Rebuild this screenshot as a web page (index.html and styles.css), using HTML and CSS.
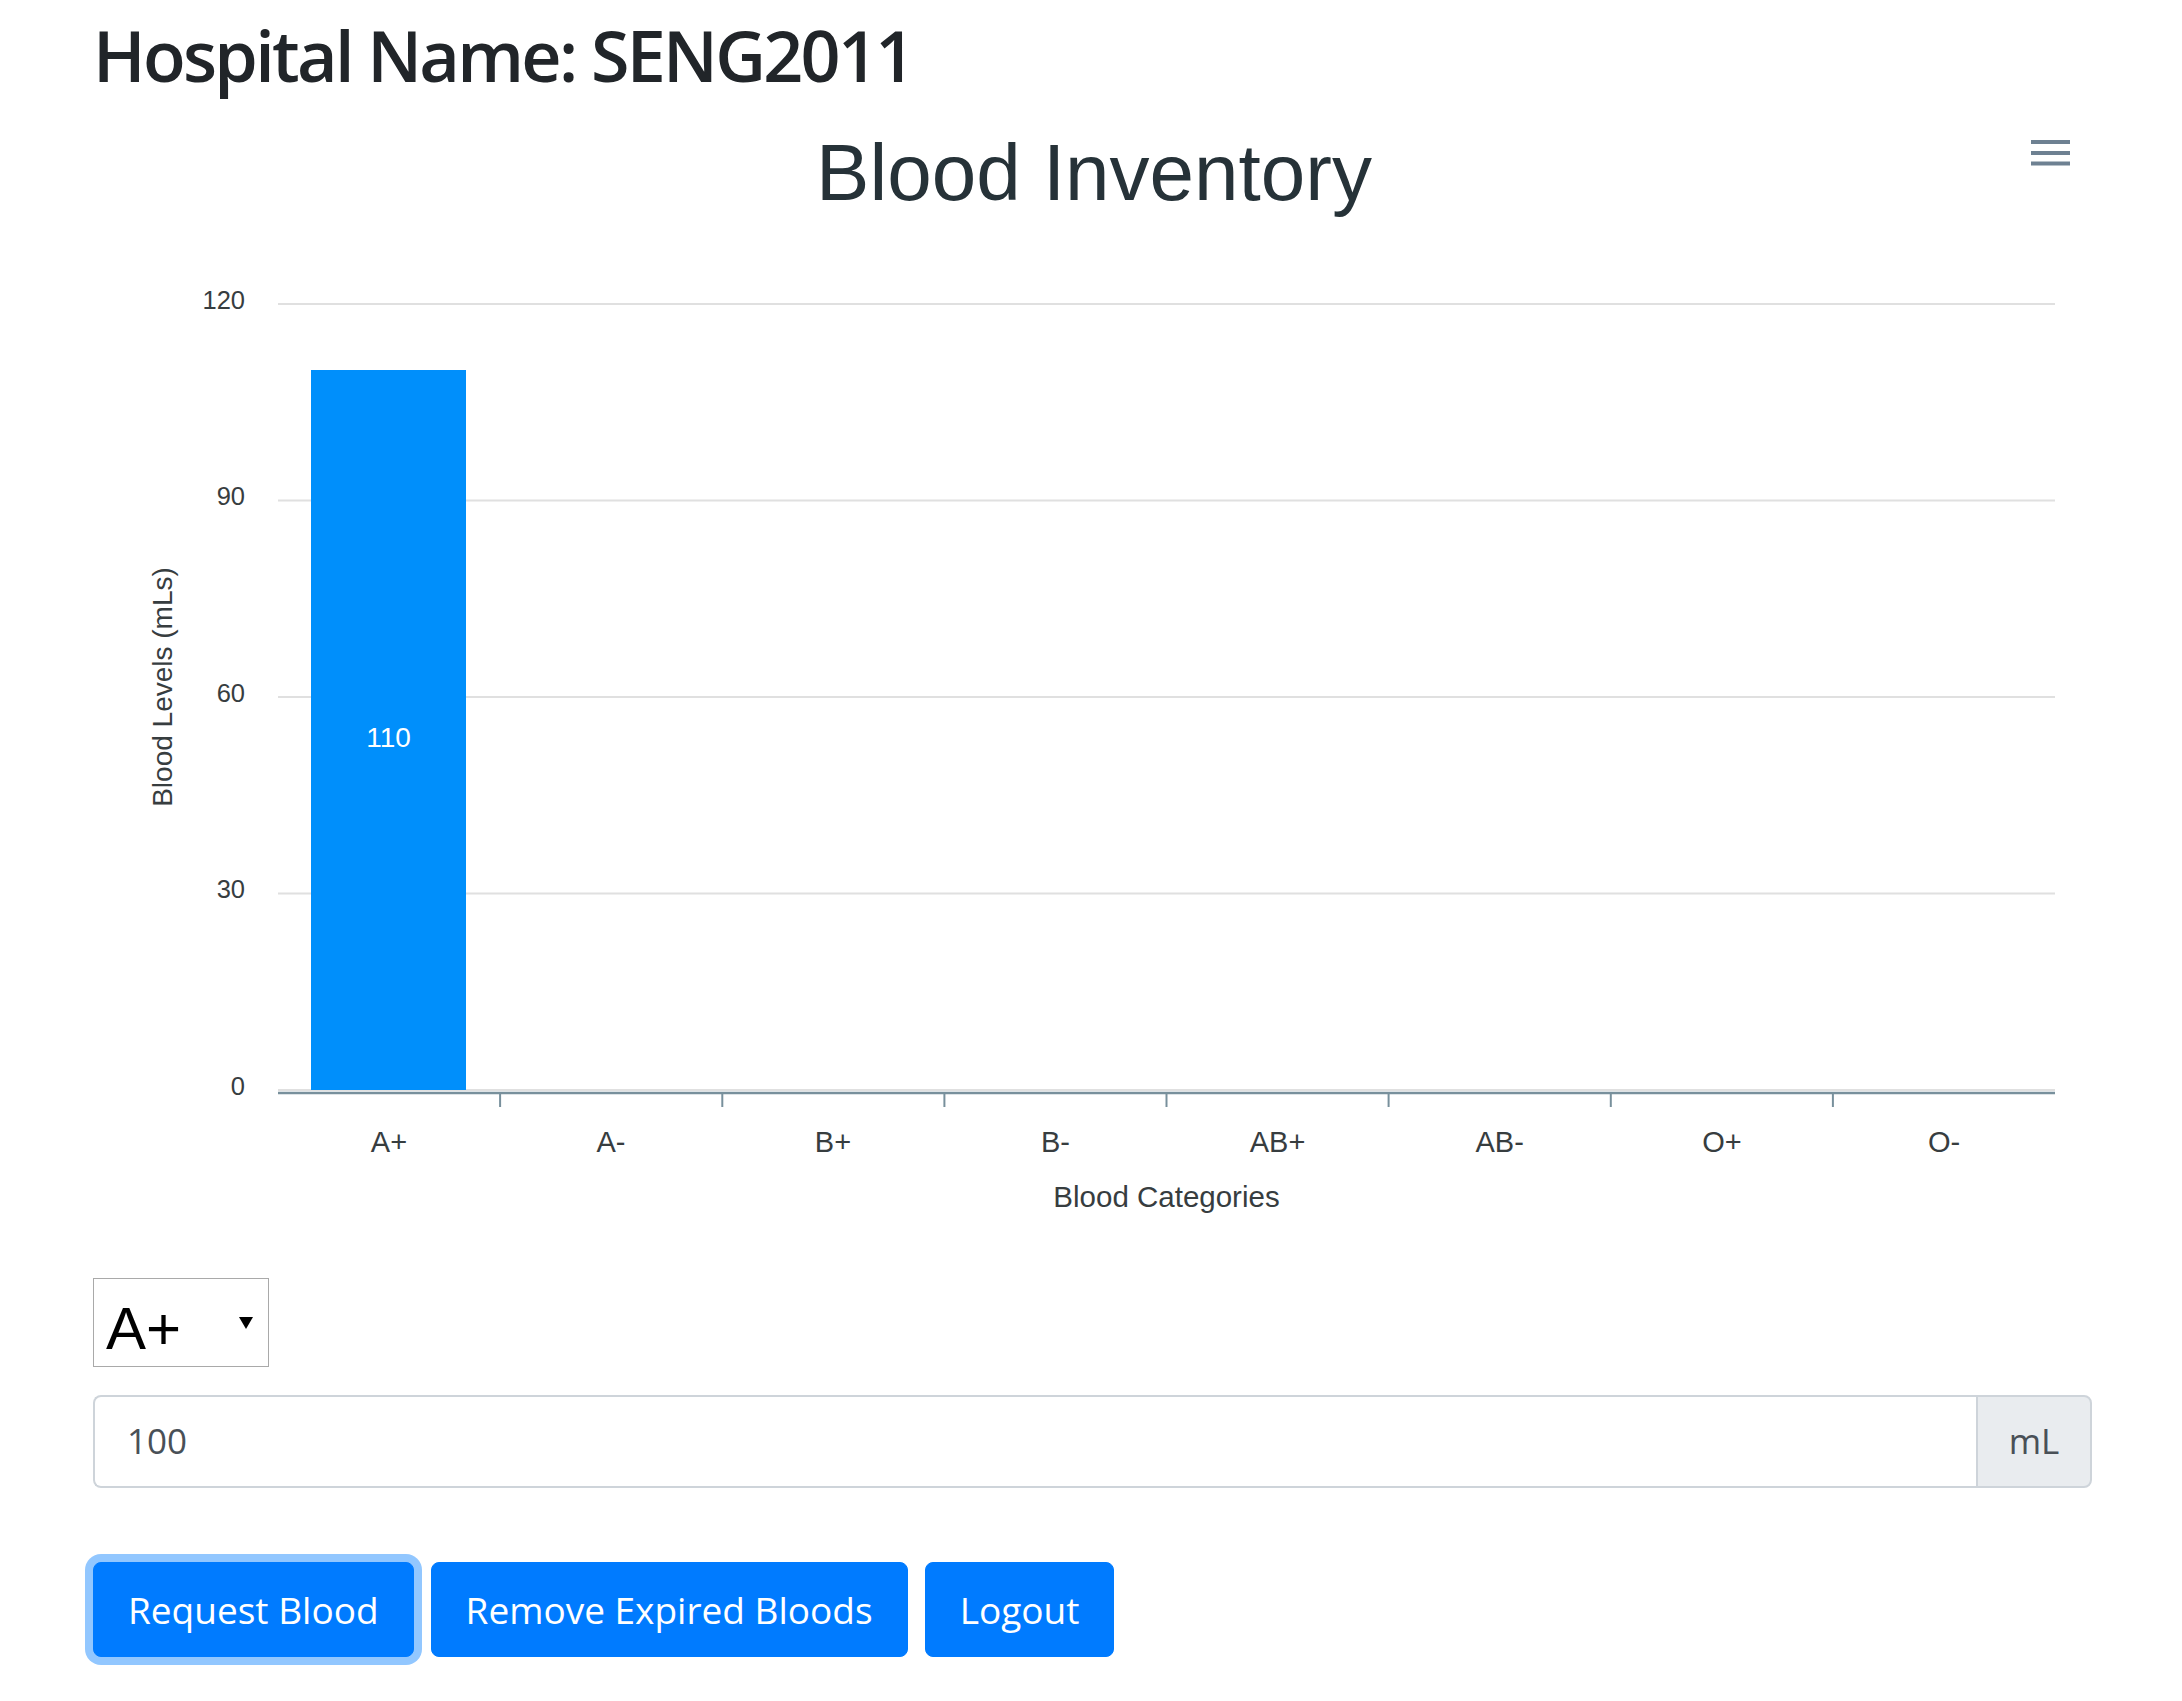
FILE: index.html
```html
<!DOCTYPE html>
<html lang="en">
<head>
<meta charset="utf-8">
<title>Blood Inventory</title>
<link rel="stylesheet" href="styles.css">
</head>
<body>
<div class="page">
  <h1 class="hospital">Hospital Name: SENG2011</h1>

  <svg class="chart" width="1999" height="1181" viewBox="0 0 1999 1181" xmlns="http://www.w3.org/2000/svg">
    <text class="chart-title" x="1001" y="103" text-anchor="middle">Blood Inventory</text>

    <g class="menu-icon" fill="#6E8192">
      <rect x="1938" y="43" width="39" height="4"/>
      <rect x="1938" y="54" width="39" height="4"/>
      <rect x="1938" y="64.5" width="39" height="4"/>
    </g>

    <g class="grid" stroke="#e0e0e0" stroke-width="2">
      <line x1="185" y1="207" x2="1962" y2="207"/>
      <line x1="185" y1="403.5" x2="1962" y2="403.5"/>
      <line x1="185" y1="600" x2="1962" y2="600"/>
      <line x1="185" y1="796.5" x2="1962" y2="796.5"/>
      <line x1="185" y1="993" x2="1962" y2="993"/>
    </g>

    <g class="ylabels">
      <text x="152" y="211.5" text-anchor="end">120</text>
      <text x="152" y="408" text-anchor="end">90</text>
      <text x="152" y="604.5" text-anchor="end">60</text>
      <text x="152" y="801" text-anchor="end">30</text>
      <text x="152" y="997.5" text-anchor="end">0</text>
    </g>

    <text class="axis-title" transform="translate(79,590) rotate(-90)" text-anchor="middle">Blood Levels (mLs)</text>

    <rect class="bar" x="218" y="273" width="155" height="720" fill="#008FFB"/>
    <text class="data-label" x="295.5" y="650" text-anchor="middle">110</text>

    <g class="axis" stroke="#78909C" stroke-width="2">
      <line x1="185" y1="996" x2="1962" y2="996" stroke-width="2.5"/>
      <line x1="407.1" y1="996" x2="407.1" y2="1010"/>
      <line x1="629.3" y1="996" x2="629.3" y2="1010"/>
      <line x1="851.4" y1="996" x2="851.4" y2="1010"/>
      <line x1="1073.5" y1="996" x2="1073.5" y2="1010"/>
      <line x1="1295.6" y1="996" x2="1295.6" y2="1010"/>
      <line x1="1517.8" y1="996" x2="1517.8" y2="1010"/>
      <line x1="1739.9" y1="996" x2="1739.9" y2="1010"/>
    </g>

    <g class="xlabels" text-anchor="middle">
      <text x="296" y="1055">A+</text>
      <text x="518" y="1055">A-</text>
      <text x="740" y="1055">B+</text>
      <text x="962.5" y="1055">B-</text>
      <text x="1184.6" y="1055">AB+</text>
      <text x="1406.7" y="1055">AB-</text>
      <text x="1628.9" y="1055">O+</text>
      <text x="1851" y="1055">O-</text>
    </g>

    <text class="axis-title axis-title-x" x="1073.5" y="1110" text-anchor="middle">Blood Categories</text>
  </svg>

  <div class="select-box">
    <span class="select-value">A+</span>
    <svg class="select-arrow" width="14" height="14" viewBox="0 0 14 14" xmlns="http://www.w3.org/2000/svg"><polygon points="0,1 14,1 7,13" fill="#000"/></svg>
  </div>

  <div class="input-group">
    <div class="form-control">100</div>
    <div class="input-addon">mL</div>
  </div>

  <div class="buttons">
    <button class="btn btn-focus">Request Blood</button>
    <button class="btn">Remove Expired Bloods</button>
    <button class="btn">Logout</button>
  </div>
</div>
</body>
</html>
```
FILE: styles.css
```css
html, body {
  margin: 0;
  padding: 0;
  background: #ffffff;
}

body {
  font-family: "Open Sans", "Noto Sans", sans-serif;
  color: #212529;
}

.page {
  padding: 13px 90px 40px 93px;
}

.hospital {
  margin: 0;
  font-family: "Open Sans", "Noto Sans", sans-serif;
  font-weight: 600;
  font-size: 70px;
  line-height: 84px;
  color: #212529;
  letter-spacing: -2.7px;
}

.chart {
  display: block;
  font-family: "Liberation Sans", Arial, sans-serif;
}

.chart-title {
  font-size: 80px;
  fill: #263238;
}

.ylabels text {
  font-size: 25.5px;
  fill: #373d3f;
}

.xlabels text {
  font-size: 29px;
  fill: #373d3f;
}

.axis-title {
  font-size: 28px;
  fill: #373d3f;
}

.axis-title-x {
  font-size: 29.5px;
}

.data-label {
  font-size: 28px;
  fill: #ffffff;
}

.select-box {
  box-sizing: border-box;
  width: 176px;
  height: 89px;
  border: 1px solid #a9a9a9;
  display: flex;
  align-items: flex-start;
  justify-content: space-between;
  padding: 16px 15px 0 12px;
  font-family: "Liberation Sans", Arial, sans-serif;
}

.select-value {
  font-size: 60px;
  line-height: 67px;
  color: #000000;
}

.select-arrow {
  display: block;
  margin-top: 21px;
}

.input-group {
  margin-top: 28px;
  display: flex;
  height: 93px;
}

.form-control {
  box-sizing: border-box;
  flex: 1;
  height: 93px;
  border: 2px solid #ced4da;
  border-right: none;
  border-radius: 8px 0 0 8px;
  padding: 18px 32px;
  font-size: 35px;
  line-height: 52.5px;
  color: #495057;
  background: #ffffff;
}

.input-addon {
  box-sizing: border-box;
  width: 116px;
  height: 93px;
  border: 2px solid #ced4da;
  border-radius: 0 8px 8px 0;
  background: #e9ecef;
  padding: 18px 0;
  font-size: 35px;
  line-height: 52.5px;
  color: #495057;
  text-align: center;
}

.buttons {
  margin-top: 74px;
  display: flex;
  gap: 17px;
}

.btn {
  box-sizing: border-box;
  height: 95px;
  border: 1px solid #007bff;
  background: #007bff;
  color: #ffffff;
  border-radius: 8px;
  padding: 0 34px;
  font-family: "Open Sans", "Noto Sans", sans-serif;
  font-size: 37px;
  line-height: 55.5px;
  cursor: pointer;
}

.btn-focus {
  box-shadow: 0 0 0 8px rgba(38, 143, 255, 0.5);
}
```
